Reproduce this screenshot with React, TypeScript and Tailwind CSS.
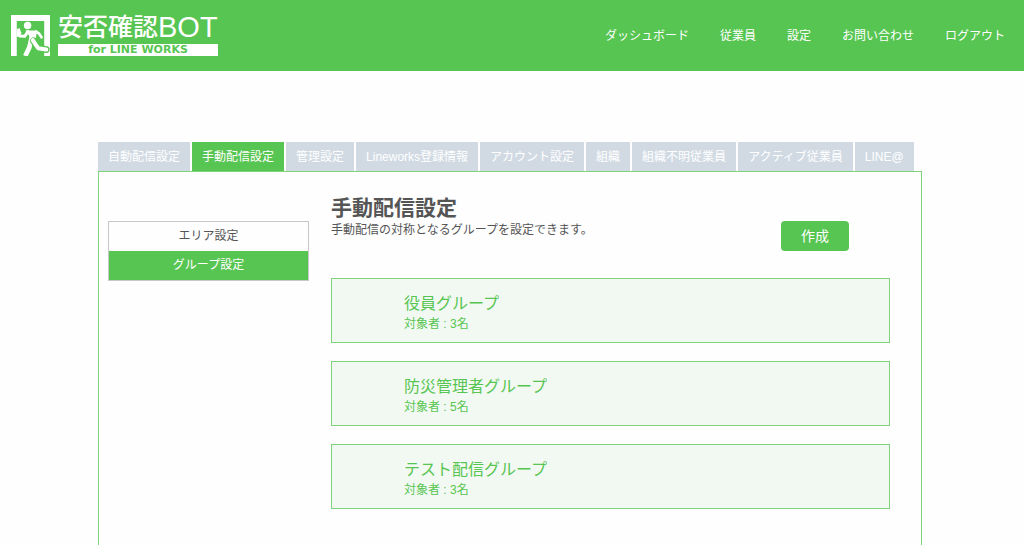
const navItems = ['ダッシュボード', '従業員', '設定', 'お問い合わせ', 'ログアウト'];

const tabs = [
  '自動配信設定',
  '手動配信設定',
  '管理設定',
  'Lineworks登録情報',
  'アカウント設定',
  '組織',
  '組織不明従業員',
  'アクティブ従業員',
  'LINE@',
];

const groups = [
  { name: '役員グループ', count: 3 },
  { name: '防災管理者グループ', count: 5 },
  { name: 'テスト配信グループ', count: 3 },
];

function ExitIcon() {
  return (
    <svg viewBox="0 0 115 121" className="h-[41px] w-[39px]" aria-hidden="true">
      <path d="M0 0H115V121H0Z" fill="#fff" />
      <path d="M17 18H98V121H17Z" fill="#57c551" />
      <path d="M17 42L25 38L31 54L22 64H17Z" fill="#fff" />
      <circle cx="49" cy="31" r="11" fill="#fff" />
      <path d="M42 46H78L70 80L52 82L54 62Z" fill="#fff" />
      <g fill="none" stroke="#fff" strokeLinecap="round" strokeLinejoin="round">
        <path d="M50 49L40 63L26 62" strokeWidth="9" />
        <path d="M74 49L82 54L90 66" strokeWidth="8" />
        <path d="M59 76L54 96L42 121" strokeWidth="14" strokeLinecap="butt" />
        <path d="M66 76L80 98L104 102" strokeWidth="20" stroke="#57c551" />
        <path d="M64 74L80 98L104 102" strokeWidth="12" />
      </g>
    </svg>
  );
}

function Logo() {
  return (
    <a href="#" className="flex gap-2 text-white">
      <ExitIcon />
      <div className="w-[160px]">
        <div className="flex h-[29px] items-center pb-1 text-[25px] leading-[25px] font-medium whitespace-nowrap">
          <span>安否確認</span>
          <span className="text-[29px] font-normal">BOT</span>
        </div>
        <div className="h-3 bg-white text-center font-['DejaVu_Sans'] text-[11px] leading-3 font-bold text-[#57c551]">
          for LINE WORKS
        </div>
      </div>
    </a>
  );
}

export default function App() {
  return (
    <div className="flex min-h-screen flex-col bg-[#fefefe] font-['Liberation_Sans','Noto_Sans_CJK_JP',sans-serif] text-[12px] text-[#555]">
      {/* Header */}
      <header className="flex h-[71px] items-center justify-between bg-[#57c551] pr-[19px] pl-[11px]">
        <Logo />
        <nav className="flex gap-[31px] pt-px text-white">
          {navItems.map((item) => (
            <a key={item} href="#" className="whitespace-nowrap">
              {item}
            </a>
          ))}
        </nav>
      </header>

      <main className="flex flex-1 flex-col pt-[71px] pr-[102px] pl-[98px]">
        {/* Tabs */}
        <nav className="flex gap-0.5">
          {tabs.map((tab) => (
            <a
              key={tab}
              href="#"
              className={`px-2.5 pt-[5px] pb-1 leading-5 whitespace-nowrap text-white ${
                tab === '手動配信設定' ? 'bg-[#57c551]' : 'bg-[#d1dae3]'
              }`}
            >
              {tab}
            </a>
          ))}
        </nav>

        <div className="flex flex-1 items-start gap-[22px] border-x border-t border-[#7fd37a] pr-[31px] pl-[9px]">
          {/* Side menu */}
          <ul className="mt-[49px] w-[201px] shrink-0 border border-[#c8c8c8] text-center leading-[29px]">
            <li>
              <a href="#" className="block">
                エリア設定
              </a>
            </li>
            <li>
              <a href="#" className="block bg-[#57c551] text-white">
                グループ設定
              </a>
            </li>
          </ul>

          <section className="flex-1 pt-[23px] pb-8">
            <div className="mb-[27px] flex justify-between">
              <div>
                <h1 className="text-[21px] leading-[25px] font-bold">手動配信設定</h1>
                <p className="leading-5">手動配信の対称となるグループを設定できます。</p>
              </div>
              <button
                type="button"
                className="mt-[26px] mr-[41px] rounded bg-[#57c551] px-5 text-[14px] leading-[30px] text-white"
              >
                作成
              </button>
            </div>

            {/* Groups */}
            <ul className="flex flex-col gap-[18px]">
              {groups.map((group) => (
                <li
                  key={group.name}
                  className="border border-[#7fd37a] bg-[#f2f9f3] pt-[15px] pb-2 pl-[72px] text-[#57c551]"
                >
                  <h2 className="text-[16px] leading-5">{group.name}</h2>
                  <p className="leading-5">対象者 : {group.count}名</p>
                </li>
              ))}
            </ul>
          </section>
        </div>
      </main>
    </div>
  );
}
